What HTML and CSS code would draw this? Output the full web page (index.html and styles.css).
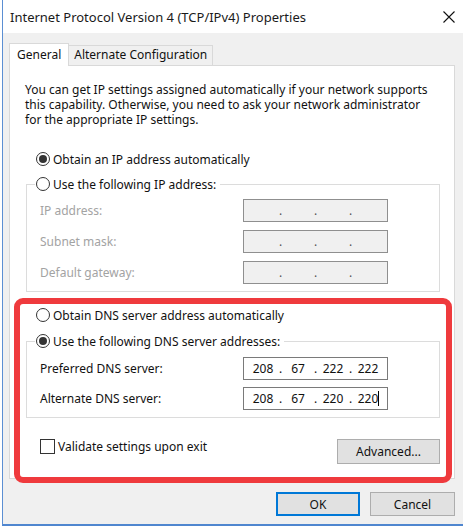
FILE: index.html
```html
<!DOCTYPE html>
<html>
<head>
    <title>Internet Protocol Version 4 (TCP/IPv4) Properties</title>
    <link rel="stylesheet" href="styles.css">
</head>
<body>
    <div class="window">
        <div class="titlebar">
            <span class="title">Internet Protocol Version 4 (TCP/IPv4) Properties</span>
            <svg class="close" width="12" height="12" viewBox="0 0 12 12">
                <path d="M0.5 0.5 L11.5 11.5 M11.5 0.5 L0.5 11.5" stroke="#111" stroke-width="1.1" fill="none"/>
            </svg>
        </div>

        <div class="dialog">
            <div class="tabs">
                <div class="tab active">General</div>
                <div class="tab">Alternate Configuration</div>
            </div>

            <div class="panel">
                <p class="intro">You can get IP settings assigned automatically if your network supports this capability. Otherwise, you need to ask your network administrator for the appropriate IP settings.</p>

                <label class="radio first"><span class="dot checked"></span>Obtain an IP address automatically</label>

                <fieldset class="group">
                    <legend><label class="radio"><span class="dot"></span>Use the following IP address:</label></legend>
                    <div class="row disabled">
                        <span class="label">IP address:</span>
                        <div class="ip"><span></span><i>.</i><span></span><i>.</i><span></span><i>.</i><span></span></div>
                    </div>
                    <div class="row disabled">
                        <span class="label">Subnet mask:</span>
                        <div class="ip"><span></span><i>.</i><span></span><i>.</i><span></span><i>.</i><span></span></div>
                    </div>
                    <div class="row disabled">
                        <span class="label">Default gateway:</span>
                        <div class="ip"><span></span><i>.</i><span></span><i>.</i><span></span><i>.</i><span></span></div>
                    </div>
                </fieldset>

                <label class="radio dns-auto"><span class="dot"></span>Obtain DNS server address automatically</label>

                <fieldset class="group dns">
                    <legend><label class="radio"><span class="dot checked"></span>Use the following DNS server addresses:</label></legend>
                    <div class="row">
                        <span class="label">Preferred DNS server:</span>
                        <div class="ip"><span>208</span><i>.</i><span>67</span><i>.</i><span>222</span><i>.</i><span>222</span></div>
                    </div>
                    <div class="row">
                        <span class="label">Alternate DNS server:</span>
                        <div class="ip"><span>208</span><i>.</i><span>67</span><i>.</i><span>220</span><i>.</i><span class="caret">220</span></div>
                    </div>
                </fieldset>

                <div class="panel-foot">
                    <label class="check"><span class="box"></span>Validate settings upon exit</label>
                    <button class="btn advanced">Advanced...</button>
                </div>
            </div>

            <div class="actions">
                <button class="btn primary">OK</button>
                <button class="btn">Cancel</button>
            </div>
        </div>

        <div class="highlight"></div>
    </div>
</body>
</html>
```

FILE: styles.css
```css
* {
    box-sizing: border-box;
}
body {
    margin: 0;
    background: #fff;
    font-family: "Noto Sans", "Open Sans", sans-serif;
    font-size: 12px;
    color: #111;
}
.window {
    position: relative;
    margin-left: 2px;
    width: 461px;
    height: 526px;
    border-left: 1px solid #5b8fd3;
    border-bottom: 2px solid #4f86cf;
    background: #f0f0f0;
}
.titlebar {
    height: 33px;
    background: #fff;
    display: flex;
    align-items: center;
    justify-content: space-between;
    padding: 0 8px 0 7px;
}
.title {
    font-size: 13px;
    color: #1a1a1a;
}
.dialog {
    padding: 10px 8px 0 6px;
}
.tabs {
    display: flex;
    align-items: flex-end;
    height: 22px;
}
.tab {
    height: 20px;
    line-height: 18px;
    padding: 0 5px;
    border: 1px solid #d9d9d9;
    border-bottom: none;
    background: #f0f0f0;
    margin-left: -1px;
}
.tab.active {
    height: 23px;
    margin-bottom: -1px;
    margin-left: 0;
    padding: 0 7px;
    line-height: 21px;
    background: #fff;
    position: relative;
    z-index: 1;
}
.panel {
    background: #fff;
    border: 1px solid #d9d9d9;
    padding: 0 0 14px;
}
.intro {
    margin: 0;
    padding: 16px 18px 0 15px;
    line-height: 15px;
}
.radio {
    display: flex;
    align-items: center;
    height: 16px;
}
.radio.first {
    margin: 24px 0 0 26px;
}
.dot {
    width: 14px;
    height: 14px;
    border: 1px solid #333;
    border-radius: 50%;
    margin-right: 3px;
    display: flex;
    align-items: center;
    justify-content: center;
    background: #fff;
}
.dot.checked::after {
    content: "";
    width: 8px;
    height: 8px;
    border-radius: 50%;
    background: #333;
}
.group {
    margin: 9px 14px 0 16px;
    padding: 7px 0 7px;
    border: 1px solid #dcdcdc;
    display: flex;
    flex-direction: column;
    gap: 8px;
}
.group legend {
    margin-left: 8px;
    padding: 0 4px 0 1px;
}
.row {
    display: flex;
    align-items: center;
    height: 23px;
    padding-left: 13px;
}
.row .label {
    flex: 1;
}
.row.disabled .label {
    color: #a3a3a3;
}
.ip {
    width: 145px;
    height: 23px;
    margin-right: 51px;
    border: 1px solid #7a7a7a;
    background: #fff;
    display: flex;
    align-items: center;
    padding-left: 3px;
}
.row.disabled .ip {
    border-color: #8f8f8f;
    background: #f0f0f0;
    color: #555;
}
.ip span {
    width: 32px;
    text-align: center;
}
.ip i {
    width: 3px;
    font-style: normal;
    text-align: center;
}
.caret {
    position: relative;
}
.caret::after {
    content: "";
    position: absolute;
    right: 5px;
    top: 1px;
    bottom: 1px;
    width: 1px;
    background: #000;
}
.dns-auto {
    margin: 15px 0 0 26px;
}
.group.dns {
    margin-top: 10px;
    padding-top: 8px;
    gap: 7px;
}
.panel-foot {
    display: flex;
    justify-content: space-between;
    align-items: flex-start;
    margin: 20px 14px 0 30px;
}
.check {
    display: flex;
    align-items: center;
    height: 16px;
}
.box {
    width: 15px;
    height: 15px;
    border: 1px solid #333;
    margin-right: 3px;
}
.btn {
    font-family: inherit;
    font-size: 12px;
    color: #111;
    background: #e1e1e1;
    border: 1px solid #adadad;
    height: 24px;
    padding: 0;
}
.advanced {
    width: 103px;
    height: 25px;
    margin-top: 1px;
}
.actions {
    display: flex;
    justify-content: flex-end;
    gap: 10px;
    margin-top: 13px;
}
.actions .btn {
    width: 85px;
}
.actions .primary {
    width: 84px;
    border-color: #0078d7;
    box-shadow: inset 0 0 0 1px #0078d7;
}
.highlight {
    position: absolute;
    left: 11px;
    top: 298px;
    width: 438px;
    height: 185px;
    border: 6px solid #ef3a3d;
    border-radius: 9px;
}
```
